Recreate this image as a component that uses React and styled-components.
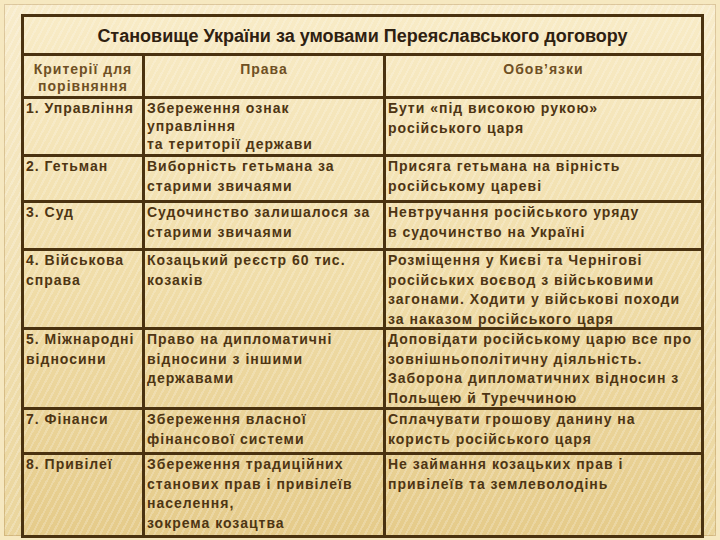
import React from 'react';
import styled, { createGlobalStyle } from 'styled-components';

const GlobalStyle = createGlobalStyle`
  html, body {
    margin: 0;
    padding: 0;
    background: #efdfb0;
  }
`;

const Slide = styled.div`
  width: 720px;
  height: 540px;
  box-sizing: border-box;
  padding: 14px 16px 0 21px;
  overflow: hidden;
  font-family: "Liberation Sans", Arial, sans-serif;
  background:
    repeating-linear-gradient(
      -62deg,
      rgba(255, 255, 255, 0.22) 0 2px,
      rgba(255, 255, 255, 0) 2px 6px
    ),
    linear-gradient(180deg, #f8eccb 0%, #f2e2b6 45%, #ead59c 100%);
  box-shadow: inset 0 0 0 4px #f6e8c0, inset 0 0 0 5px rgba(170, 130, 70, 0.35);
`;

const Table = styled.div`
  display: grid;
  width: 683px;
  box-sizing: border-box;
  grid-template-columns: 121px 241px 318px;
  grid-template-rows: 39px 43px 58px 46px 48px 79px 80px 45px 83px;
  border-left: 3px solid #4a3210;
  border-top: 3px solid #4a3210;
  background:
    repeating-linear-gradient(
      -62deg,
      rgba(255, 255, 255, 0.2) 0 2px,
      rgba(255, 255, 255, 0) 2px 6px
    ),
    linear-gradient(180deg, #f8ebc6 0%, #f0dda9 50%, #e5cb8a 100%);
`;

const Cell = styled.div`
  box-sizing: border-box;
  border-right: 3px solid #4a3210;
  border-bottom: 3px solid #4a3210;
  padding: 0 2px;
  font-size: 14px;
  line-height: ${(p) => (p.$tight ? '18px' : '19.5px')};
  font-weight: bold;
  letter-spacing: 1px;
  white-space: nowrap;
  color: #4e3513;
`;

const TitleCell = styled(Cell)`
  grid-column: 1 / -1;
  display: flex;
  align-items: center;
  justify-content: center;
  padding: 3px 0 0 0;
  font-size: 18px;
  letter-spacing: 0;
  color: #2e2010;
`;

const HeadCell = styled(Cell)`
  text-align: center;
  padding-top: 5px;
  line-height: 17px;
  color: #6f5024;
`;

const rows = [
  {
    crit: ['1. Управління'],
    rights: ['Збереження ознак', 'управління', 'та території держави'],
    duties: ['Бути «під високою рукою»', 'російського царя'],
    tight: true,
  },
  {
    crit: ['2. Гетьман'],
    rights: ['Виборність гетьмана за', 'старими звичаями'],
    duties: ['Присяга гетьмана на вірність', 'російському цареві'],
  },
  {
    crit: ['3. Суд'],
    rights: ['Судочинство залишалося за', 'старими звичаями'],
    duties: ['Невтручання російського уряду', 'в судочинство на Україні'],
  },
  {
    crit: ['4. Військова', 'справа'],
    rights: ['Козацький реєстр 60 тис.', 'козаків'],
    duties: [
      'Розміщення у Києві та Чернігові',
      'російських воєвод з військовими',
      'загонами. Ходити у військові походи',
      'за наказом російського царя',
    ],
  },
  {
    crit: ['5. Міжнародні', 'відносини'],
    rights: ['Право на дипломатичні', 'відносини з іншими', 'державами'],
    duties: [
      'Доповідати російському царю все про',
      'зовнішньополітичну діяльність.',
      'Заборона дипломатичних відносин з',
      'Польщею й Туреччиною',
    ],
  },
  {
    crit: ['7. Фінанси'],
    rights: ['Збереження власної', 'фінансової системи'],
    duties: ['Сплачувати грошову данину на', 'користь російського царя'],
  },
  {
    crit: ['8. Привілеї'],
    rights: ['Збереження традиційних', 'станових прав і привілеїв', 'населення,', 'зокрема козацтва'],
    duties: ['Не займання козацьких прав і', 'привілеїв та землеволодінь'],
  },
];

const Lines = ({ items }) =>
  items.map((line, i) => (
    <React.Fragment key={i}>
      {i > 0 && <br />}
      {line}
    </React.Fragment>
  ));

const App = () => (
  <>
    <GlobalStyle />
    <Slide>
      <Table>
        <TitleCell>Становище України за умовами Переяславського договору</TitleCell>
        <HeadCell>
          Критерії для
          <br />
          порівняння
        </HeadCell>
        <HeadCell>Права</HeadCell>
        <HeadCell>Обов’язки</HeadCell>
        {rows.map((row, i) => (
          <React.Fragment key={i}>
            <Cell>
              <Lines items={row.crit} />
            </Cell>
            <Cell $tight={row.tight}>
              <Lines items={row.rights} />
            </Cell>
            <Cell>
              <Lines items={row.duties} />
            </Cell>
          </React.Fragment>
        ))}
      </Table>
    </Slide>
  </>
);

export default App;
